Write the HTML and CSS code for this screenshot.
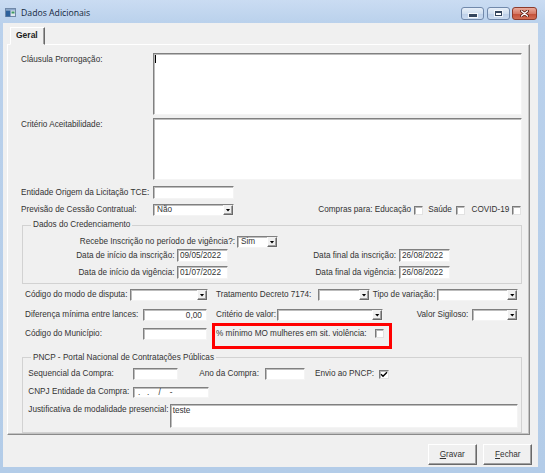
FILE: index.html
```html
<!DOCTYPE html>
<html lang="pt-BR">
<head>
    <meta charset="UTF-8">
    <meta name="viewport" content="width=device-width, initial-scale=1.0">
    <title>Dados Adicionais</title>
    <link rel="stylesheet" href="styles.css">
</head>
<body>
<div class="window">
    <div class="titlebar">
        <svg class="app-icon" width="11" height="9" viewBox="0 0 11 9">
            <rect x="0.5" y="0.5" width="10" height="8" fill="#dfe6ee" stroke="#6f88a8"/>
            <rect x="1" y="1" width="9" height="1.5" fill="#8aa6c9"/>
            <rect x="1" y="2.5" width="4.5" height="6" fill="#2d619c"/>
            <rect x="6.5" y="3.5" width="3" height="2" fill="#3f9a63"/>
        </svg>
        <span class="title">Dados Adicionais</span>
        <div class="caption">
            <span class="cbtn min"><i></i></span>
            <span class="cbtn max"><i></i></span>
            <span class="cbtn close">
                <svg width="9" height="7" viewBox="0 0 9 7">
                    <path d="M1.5 1 L7.5 6 M7.5 1 L1.5 6" stroke="#5b1c12" stroke-width="3" stroke-linecap="round"/>
                    <path d="M1.5 1 L7.5 6 M7.5 1 L1.5 6" stroke="#fff" stroke-width="1.4" stroke-linecap="round"/>
                </svg>
            </span>
        </div>
    </div>

    <div class="client">
        <div class="tabs"><span class="tab">Geral</span></div>

        <div class="page">
            <div class="row top r-claus">
                <label class="lbl l-memo">Cláusula Prorrogação:</label>
                <div class="memo m-big"><span class="caret"></span></div>
            </div>
            <div class="row top r-crit">
                <label class="lbl l-memo">Critério Aceitabilidade:</label>
                <div class="memo m-big"></div>
            </div>
            <div class="row r-ent">
                <label class="lbl l-memo">Entidade Origem da Licitação TCE:</label>
                <input class="field f-81" type="text">
            </div>
            <div class="row r-prev">
                <label class="lbl l-memo">Previsão de Cessão Contratual:</label>
                <div class="combo f-81"><span class="val">Não</span><span class="drop"><i></i></span></div>
                <div class="compras">
                    <span class="lbl">Compras para: Educação</span><span class="check c-edu"></span>
                    <span class="lbl c-sau-l">Saúde</span><span class="check c-sau"></span>
                    <span class="lbl c-cov-l">COVID-19</span><span class="check c-cov"></span>
                </div>
            </div>

            <fieldset class="group g-cred">
                <legend>Dados do Credenciamento</legend>
                <div class="row r-rec">
                    <label class="lbl right l-rec">Recebe Inscrição no período de vigência?:</label>
                    <div class="combo f-sim"><span class="val">Sim</span><span class="drop"><i></i></span></div>
                </div>
                <div class="row r-insc">
                    <label class="lbl right l-dini">Data de início da inscrição:</label>
                    <input class="field f-date" type="text" value="09/05/2022">
                    <label class="lbl right l-dfim">Data final da inscrição:</label>
                    <input class="field f-date" type="text" value="26/08/2022">
                </div>
                <div class="row r-vig">
                    <label class="lbl right l-dini">Data de início da vigência:</label>
                    <input class="field f-date" type="text" value="01/07/2022">
                    <label class="lbl right l-dfim">Data final da vigência:</label>
                    <input class="field f-date" type="text" value="26/08/2022">
                </div>
            </fieldset>

            <div class="row r-disp">
                <label class="lbl l-disp">Código do modo de disputa:</label>
                <div class="combo f-disp"><span class="val"></span><span class="drop"><i></i></span></div>
                <label class="lbl l-trat">Tratamento Decreto 7174:</label>
                <div class="combo f-trat"><span class="val"></span><span class="drop"><i></i></span></div>
                <label class="lbl l-tipo">Tipo de variação:</label>
                <div class="combo f-tipo"><span class="val"></span><span class="drop"><i></i></span></div>
            </div>
            <div class="row r-dif">
                <label class="lbl l-dif">Diferença mínima entre lances:</label>
                <input class="field f-num" type="text" value="0,00">
                <label class="lbl l-crit">Critério de valor:</label>
                <div class="combo f-crit"><span class="val"></span><span class="drop"><i></i></span></div>
                <label class="lbl l-sig">Valor Sigiloso:</label>
                <div class="combo f-sig"><span class="val"></span><span class="drop"><i></i></span></div>
            </div>
            <div class="row top r-mun">
                <label class="lbl l-dif">Código do Município:</label>
                <input class="field f-num" type="text">
                <div class="highlight">
                    <label class="lbl l-mulh">% mínimo MO mulheres em sit. violência:</label>
                    <span class="check"></span>
                </div>
            </div>

            <fieldset class="group g-pncp">
                <legend>PNCP - Portal Nacional de Contratações Públicas</legend>
                <div class="row r-seq">
                    <label class="lbl l-seq">Sequencial da Compra:</label>
                    <input class="field f-seq" type="text">
                    <label class="lbl l-ano">Ano da Compra:</label>
                    <input class="field f-ano" type="text">
                    <label class="lbl l-env">Envio ao PNCP:</label>
                    <span class="check checked">
                        <svg width="8" height="7" viewBox="0 0 8 7"><path d="M1 3.3 L3 5.3 L7 1.2" fill="none" stroke="#000" stroke-width="1.4"/></svg>
                    </span>
                </div>
                <div class="row r-cnpj">
                    <label class="lbl l-seq">CNPJ Entidade da Compra:</label>
                    <input class="field f-cnpj" type="text" value=" .   .    /    -">
                </div>
                <div class="row top r-just">
                    <label class="lbl l-just">Justificativa de modalidade presencial:</label>
                    <div class="memo m-just">teste</div>
                </div>
            </fieldset>
        </div>

        <div class="actions">
            <button class="btn"><u>G</u>ravar</button>
            <button class="btn"><u>F</u>echar</button>
        </div>
    </div>
</div>
</body>
</html>
```

FILE: styles.css
```css
* {
    box-sizing: border-box;
}
body {
    margin: 0;
    width: 545px;
    height: 473px;
    overflow: hidden;
    font-family: "Liberation Sans", Arial, sans-serif;
    font-size: 8.2px;
    color: #333;
    background: #b3cce8;
}

/* window frame */
.window {
    height: 473px;
    display: flex;
    flex-direction: column;
    background: linear-gradient(#cadcf2, #bad1ec 23px, #b3cce8);
}
.titlebar {
    height: 23px;
    flex: none;
    display: flex;
    align-items: flex-start;
    padding: 0 8px 0 5px;
}
.app-icon {
    margin-top: 8px;
    margin-right: 5px;
}
.title {
    margin-top: 7px;
    line-height: 12px;
    font-family: "Open Sans", sans-serif;
    font-size: 8.7px;
    color: #13263d;
}
.caption {
    margin-left: auto;
    margin-top: 7px;
    display: flex;
}
.cbtn {
    width: 23px;
    height: 12.5px;
    border: 1px solid #7189ab;
    border-radius: 3px;
    background: linear-gradient(#e6eef8, #d0dff0 50%, #bccfe8 51%, #cadbf0);
    display: flex;
    align-items: center;
    justify-content: center;
}
.min { margin-right: 3px; }
.max { margin-right: 2px; }
.min i {
    width: 8px;
    height: 2.5px;
    margin-top: 4px;
    background: #34465e;
    box-shadow: 0 0 0 1px rgba(255, 255, 255, 0.8);
}
.max i {
    width: 7px;
    height: 5.5px;
    border: 1px solid #34465e;
    border-top-width: 2px;
    background: #fff;
    box-shadow: 0 0 0 1px rgba(255, 255, 255, 0.7);
}
.close {
    width: 25px;
    border-color: #8c3b2c;
    background: linear-gradient(#eaaa9b, #d67a66 50%, #c24d36 51%, #d26d53);
}

.client {
    height: 443.7px;
    margin: 0 7px 0 3px;
    background: #f0f0f0;
}

/* tab control */
.tabs {
    height: 21px;
    padding-left: 7px;
    display: flex;
}
.tab {
    position: relative;
    z-index: 1;
    margin-top: 4px;
    width: 35px;
    height: 18px;
    padding-left: 5px;
    line-height: 15px;
    font-weight: bold;
    font-size: 8.5px;
    color: #222;
    background: #f0f0f0;
    border: 1px solid;
    border-color: #fff #696969 transparent #fff;
    box-shadow: inset -1px 0 0 #a0a0a0;
}
.page {
    width: 523px;
    height: 391px;
    margin-left: 4px;
    border: 1px solid;
    border-color: #fff #8a8a8a #8a8a8a #fff;
    box-shadow: inset -1px -1px 0 #c4c4c4;
}

/* rows and controls */
.row {
    display: flex;
    align-items: center;
}
.row.top {
    align-items: flex-start;
}
.lbl {
    flex: none;
    white-space: nowrap;
    line-height: 12px;
}
.right {
    text-align: right;
}
.field, .combo, .memo {
    flex: none;
    align-self: stretch;
    background: #fff;
    border: 1px solid;
    border-color: #808080 #f4f4f4 #f4f4f4 #808080;
    box-shadow: inset 1px 1px 0 #bdbdbd;
}
input.field {
    margin: 0;
    padding: 0 1px 0 2px;
    font: inherit;
    color: inherit;
    outline: none;
}
.combo {
    display: flex;
}
.combo .val {
    flex: 1;
    padding-left: 3px;
    line-height: 10px;
}
.combo .drop {
    width: 10px;
    flex: none;
    display: flex;
    align-items: center;
    justify-content: center;
    background: #f0f0f0;
    border: 1px solid;
    border-color: #f0f0f0 #696969 #696969 #fff;
    box-shadow: inset -1px -1px 0 #a0a0a0;
}
.combo .drop i {
    width: 5px;
    height: 3px;
    background: #000;
    clip-path: polygon(0 0, 100% 0, 50% 100%);
}
.check {
    flex: none;
    width: 9px;
    height: 9px;
    display: flex;
    align-items: center;
    justify-content: center;
    background: #fff;
    border: 1px solid;
    border-color: #7a7a7a #e2e2e2 #e2e2e2 #7a7a7a;
    box-shadow: inset 1px 1px 0 #b8b8b8;
}
.memo {
    align-self: auto;
}
.caret {
    display: block;
    width: 1px;
    height: 8px;
    margin: 1px 0 0 0.5px;
    background: #000;
}

/* upper block */
.r-claus { margin-top: 8px; padding-left: 13px; }
.r-crit { margin-top: 3px; padding-left: 13px; }
.r-claus .lbl, .r-crit .lbl { padding-top: 1px; }
.l-memo { width: 132px; }
.m-big { width: 369px; height: 62px; }
.r-ent { margin-top: 6px; height: 13px; padding-left: 13px; }
.r-prev { margin-top: 5px; height: 12px; padding: 0 8px 0 13px; }
.f-81 { width: 81px; }
.compras {
    margin-left: auto;
    display: flex;
    align-items: center;
}
.c-edu { margin-left: 3px; }
.c-sau-l { margin-left: 5px; }
.c-sau { margin-left: 4px; }
.c-cov-l { margin-left: 6.7px; }
.c-cov { margin-left: 2.7px; }

/* group boxes */
fieldset.group {
    min-width: 0;
    margin: 3px 7px 0 14px;
    padding: 0 0 4px;
    border: 1px solid #d2d2d2;
}
fieldset.group legend {
    margin-left: 8px;
    padding: 0 2px;
    line-height: 12px;
}
.r-rec { margin-top: 5px; height: 12px; }
.l-rec { width: 212px; margin-right: 2px; }
.f-sim { width: 41px; }
.r-insc { margin-top: 1px; height: 13px; }
.r-vig { margin-top: 4px; height: 13px; }
.l-dini { width: 151.5px; margin-right: 2.5px; }
.l-dfim { width: 168px; margin-right: 3px; }
.f-date { width: 51px; }

/* middle block */
.r-disp { margin-top: 5px; height: 12px; padding-left: 17px; }
.l-disp { width: 105px; }
.f-disp { width: 78px; }
.l-trat { width: 102px; margin-left: 8px; }
.f-trat { width: 52px; }
.l-tipo { width: 64px; margin-left: 2.7px; }
.f-tipo { width: 81.6px; }
.r-dif { margin-top: 8px; height: 12px; padding-left: 17px; }
.l-dif { width: 117.7px; }
input.f-num { width: 64.6px; text-align: right; padding-right: 4.5px; }
.l-crit { width: 61.3px; margin-left: 8.7px; }
.f-crit { width: 106px; }
.l-sig { width: 55px; margin-left: 33.4px; }
.f-sig { width: 46.6px; }
.r-mun { margin-top: 2px; padding-left: 17px; }
.r-mun > .lbl { margin-top: 5px; }
.r-mun > .field { align-self: auto; margin-top: 5px; height: 12px; }
.highlight {
    flex: none;
    display: flex;
    align-items: flex-start;
    width: 180px;
    height: 26px;
    margin-left: 4.4px;
    padding-left: 1.3px;
    border: 3px solid #ff0000;
}
.l-mulh { width: 159px; margin-top: 2px; }
.highlight .check { margin-top: 3.3px; }

/* PNCP */
.g-pncp { margin-top: 2.7px !important; padding-bottom: 4.3px !important; }
.r-seq { margin-top: 4.6px; height: 12px; padding-left: 5.3px; }
.l-seq { width: 104.4px; }
.f-seq { width: 45.6px; }
.l-ano { width: 65.7px; margin-left: 21px; }
.f-ano { width: 40px; }
.l-env { width: 64.3px; margin-left: 10px; }
.r-seq .check { width: 10px; height: 8.5px; }
.r-cnpj { margin-top: 6.4px; height: 11px; padding-left: 5.3px; }
input.f-cnpj { width: 76.6px; white-space: pre; }
.r-just { margin-top: 6.6px; padding-left: 5.3px; }
.l-just { width: 141.7px; }
.m-just {
    width: 348.3px;
    height: 23.4px;
    padding: 0.5px 0 0 1.7px;
    line-height: 10px;
}

/* buttons */
.actions {
    display: flex;
    justify-content: flex-end;
    gap: 6.6px;
    margin-top: 9.3px;
    padding-right: 5.7px;
}
.btn {
    width: 49px;
    height: 20.7px;
    padding: 0;
    font: inherit;
    color: #333;
    background: #f0f0f0;
    border: 1px solid;
    border-color: #fff #696969 #696969 #fff;
    box-shadow: inset -1px -1px 0 #a0a0a0;
}
```
